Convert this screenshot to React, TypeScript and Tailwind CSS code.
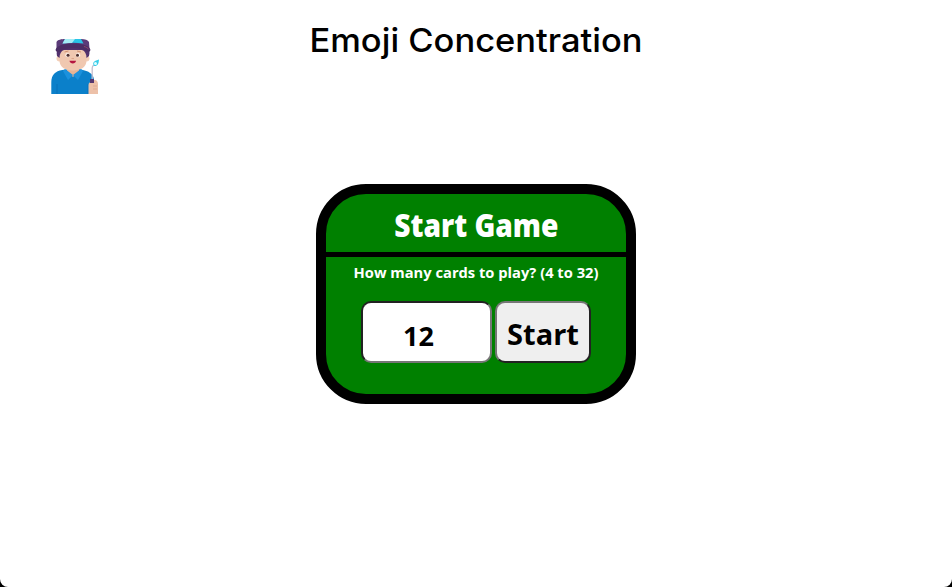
function MechanicEmoji() {
  return (
    <svg viewBox="0 0 70 70" className="h-[70px] w-[70px]" aria-label="Player">
      <path d="M11.3 64V52c0-7 4-11 11-12l7-1h10l7 2c6 2 8 6 8 12v11z" fill="#0b80ca" />
      <path d="M17.5 54v10h-1V54zM48.5 54v10h-1V54z" fill="#0870b9" />
      <path d="M27 38h12v3l-6 6-6-6z" fill="#e8b494" />
      <path d="M25 39l8 6-5 5-5-9zM41 39l-8 6 5 5 5-9z" fill="#1b91dd" />
      <circle cx="19.5" cy="28.5" r="3" fill="#f3cfb8" />
      <circle cx="46.5" cy="28.5" r="3" fill="#f3cfb8" />
      <path d="M19.5 20h27v10.5C46.5 37 41 40.5 33 40.5S19.5 37 19.5 30.5z" fill="#f0c8b0" />
      <path d="M17 26c-1.5-7 3-11 8-11h16c6 0 10 4 8 11l-2.5 2c0-4-1.5-7-4.5-8H24c-3 1-4.500 4-4.500 8z" fill="#52316d" />
      <path d="M16.500 12c1-2.200 5-3 8.500-3h16c4 0 7 1 8 3l.5 7-5-.5c-7-2-16-2-23 0l-5 .5z" fill="#5b3b79" />
      <path d="M25 9h16l2.500 4.500c-7-1-14-1-21 0z" fill="#28c4e7" />
      <path d="M25 9h10l-3 4-9.500.5z" fill="#a5edf5" />
      <path d="M15.500 20c1-4 7-6.500 17.500-6.500S49.500 16 50.500 20c-.5 1.500-2 2.500-3 2-5-3-9-4-14.500-4s-9.500 1-14.500 4c-1 .5-2.500-.5-3-2z" fill="#4b2d65" />
      <path d="M44 16.500c2 .5 4 1.500 5 3" stroke="#8a466c" fill="none" />
      <circle cx="27.5" cy="25.2" r="2.1" fill="#fff5ee" />
      <circle cx="38" cy="25.2" r="2.1" fill="#fff5ee" />
      <circle cx="28" cy="25.200" r="1.5" fill="#50302d" />
      <circle cx="37.5" cy="25.200" r="1.5" fill="#50302d" />
      <path d="M24.500 22l4-1M37 21l4 1" stroke="#c98562" strokeWidth=".8" />
      <path d="M31.500 28.500h2.500" stroke="#dda58a" strokeWidth="1.1" />
      <path d="M29.500 30.800h6.500c-.5 3.500-6 3.500-6.500 0z" fill="#b51640" />
      <path d="M52.200 50V38c0-2 .7-2.500 2-3" fill="none" stroke="#c3bdce" strokeWidth="1.3" />
      <path d="M48.500 55c0-3 3-3.500 5.500-3v-2c2-.5 4 1 4 4v10h-9.500z" fill="#edc1a9" />
      <path d="M50 49h4v4h-4z" fill="#543770" />
      <path d="M53 56h4M53 59h4" stroke="#d5a087" strokeWidth=".6" />
      <path d="M54 36c-2.500-4 1-5.500 5-6.500-.2 4-1.500 7-5 6.500z" fill="#39cde9" />
      <circle cx="55.500" cy="33.500" r="1.500" fill="#e4feff" />
    </svg>
  );
}

export default function App() {
  return (
    <div className="h-[587px] overflow-hidden bg-black">
      <main className="flex h-full flex-col rounded-b-lg bg-white text-black">
        <header className="grid h-[184px] grid-cols-[300px_352px_300px]">
          <div className="pt-[30px] pl-10"><MechanicEmoji /></div>
          <h1 className="flex h-[82px] scale-x-[1.045] items-center justify-center whitespace-nowrap font-['Inter',sans-serif] text-[33px] font-medium">Emoji Concentration</h1>
        </header>
        <section className="mx-auto flex h-[220px] w-[320px] flex-col overflow-hidden rounded-[50px] border-[10px] border-black bg-[#008000] font-['Open_Sans',sans-serif]">
          <h2 className="flex h-[63px] shrink-0 items-center justify-center border-b-[5px] border-black pt-1 text-[32px] font-extrabold text-white"><span className="inline-block scale-x-[.88]">Start Game</span></h2>
          <form className="flex flex-col" onSubmit={(event) => event.preventDefault()}>
            <label htmlFor="cards" className="flex h-8 scale-x-[.98] items-center justify-center whitespace-nowrap pb-0.5 text-[15px] font-bold text-white">How many cards to play? (4 to 32)</label>
            <div className="mt-3 flex justify-center gap-[3px]">
              <input id="cards" defaultValue="12" className="h-[62px] w-[131px] rounded-[10px] border-2 border-t-[#222] border-r-[#767676] border-b-[#767676] border-l-[#222] bg-white pt-1.5 pr-4 text-center text-[27px] font-bold outline-none" />
              <button className="h-[62px] w-[96px] rounded-[10px] border-2 border-t-[#767676] border-r-[#222] border-b-[#222] border-l-[#767676] bg-[#efefef] pt-1 text-[29px] font-bold">Start</button>
            </div>
          </form>
        </section>
      </main>
    </div>
  );
}
